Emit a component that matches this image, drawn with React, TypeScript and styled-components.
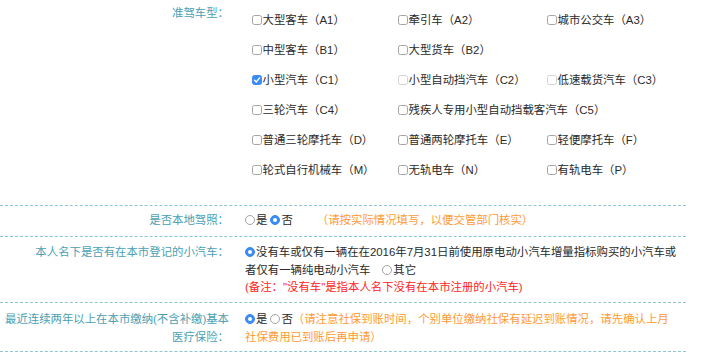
import styled, { createGlobalStyle } from "styled-components";

type Licence = { name: string; checked?: boolean; disabled?: boolean };

const licenceRows: Licence[][] = [
  [{ name: "大型客车（A1）" }, { name: "牵引车（A2）" }, { name: "城市公交车（A3）" }],
  [{ name: "中型客车（B1）" }, { name: "大型货车（B2）" }],
  [
    { name: "小型汽车（C1）", checked: true },
    { name: "小型自动挡汽车（C2）", disabled: true },
    { name: "低速载货汽车（C3）", disabled: true },
  ],
  [{ name: "三轮汽车（C4）" }, { name: "残疾人专用小型自动挡载客汽车（C5）" }],
  [{ name: "普通三轮摩托车（D）" }, { name: "普通两轮摩托车（E）" }, { name: "轻便摩托车（F）" }],
  [{ name: "轮式自行机械车（M）" }, { name: "无轨电车（N）" }, { name: "有轨电车（P）" }],
];

// checkbox glyph drawn as a small svg
const Checkbox: React.FC<{ checked?: boolean; disabled?: boolean }> = ({ checked, disabled }) => (
  <BoxIcon width="10" height="10" viewBox="0 0 10 10">
    <rect
      x="0.5"
      y="0.5"
      width="9"
      height="9"
      rx="2"
      fill={checked ? "#3a8cf4" : "#fff"}
      stroke={checked ? "#3a8cf4" : disabled ? "#d2d2d2" : "#a4a4a4"}
    />
    {checked && (
      <polyline points="2.6,5.2 4.3,7 7.6,2.9" fill="none" stroke="#fff" strokeWidth="1.4" strokeLinecap="round" strokeLinejoin="round" />
    )}
  </BoxIcon>
);

const App = () => {
  return (
    <>
      <GlobalStyle />
      <Form>
        <Row $pad="0 0 0">
          <Label $offset={5}>准驾车型：</Label>
          <Value>
            <Grid>
              {licenceRows.map((row, i) =>
                [0, 1, 2].map((j) =>
                  row[j] ? (
                    <Item key={`${i}-${j}`}>
                      <Checkbox checked={row[j].checked} disabled={row[j].disabled} />
                      <ItemText>{row[j].name}</ItemText>
                    </Item>
                  ) : (
                    <span key={`${i}-${j}`} />
                  )
                )
              )}
            </Grid>
          </Value>
        </Row>

        <Row $pad="6px 0 6.5px">
          <Label>是否本地驾照：</Label>
          <Value>
            <Radio />是<Radio $checked $gap={3} />否
            <Note $gap={24}>（请按实际情况填写，以便交管部门核实）</Note>
          </Value>
        </Row>

        <Row $pad="7px 0 5.5px">
          <Label>本人名下是否有在本市登记的小汽车：</Label>
          <Value>
            <Radio $checked />没有车或仅有一辆在在2016年7月31日前使用原电动小汽车增量指标购买的小汽车或者仅有一辆纯电动小汽车
            <Radio $gap={12} />其它
            <Warn>(备注："没有车"是指本人名下没有在本市注册的小汽车)</Warn>
          </Value>
        </Row>

        <Row $pad="8px 0 5px">
          <Label>
            最近连续两年以上在本市缴纳(不含补缴)基本
            <br />
            医疗保险：
          </Label>
          <Value>
            <Radio $checked />是<Radio $gap={3} />否
            <Note>（请注意社保到账时间，个别单位缴纳社保有延迟到账情况，请先确认上月社保费用已到账后再申请）</Note>
          </Value>
        </Row>
      </Form>
    </>
  );
};

const GlobalStyle = createGlobalStyle`
  body {
    margin: 0;
    background: #fff;
    color: #2a2a2a;
    font-family: "Liberation Sans", "Noto Sans CJK SC", sans-serif;
    font-size: 11.4px;
  }
`;

const Form = styled.div`
  width: 686px;
`;

const Row = styled.div<{ $pad: string }>`
  display: flex;
  padding: ${(p) => p.$pad};
  border-bottom: 1px dashed #8cc6d1;
  line-height: 17.5px;
`;

const Label = styled.div<{ $offset?: number }>`
  flex: none;
  width: 229px;
  margin-top: ${(p) => p.$offset ?? 0}px;
  text-align: right;
  white-space: nowrap;
  color: #4b9fb4;
`;

const Value = styled.div`
  flex: 1;
  padding: 0 8px 0 16px;
`;

const Grid = styled.div`
  display: grid;
  grid-template-columns: 146px 149px 1fr;
  grid-auto-rows: 30px;
  margin-left: 7px;
  padding: 5px 0 20px;
`;

const Item = styled.div`
  display: flex;
  align-items: center;
  white-space: nowrap;
`;

const ItemText = styled.span`
  line-height: 18px;
  color: #2a2a2a;
`;

const BoxIcon = styled.svg`
  flex: none;
  display: block;
  margin-right: 0.5px;
`;

const Radio = styled.span<{ $checked?: boolean; $gap?: number }>`
  display: inline-block;
  position: relative;
  box-sizing: border-box;
  width: 10px;
  height: 10px;
  margin: 0 1px 0 ${(p) => p.$gap ?? 0}px;
  vertical-align: -1px;
  border-radius: 50%;
  border: 1px solid ${(p) => (p.$checked ? "#3a8cf4" : "#a4a4a4")};
  background: ${(p) => (p.$checked ? "#3a8cf4" : "#fff")};

  &::after {
    content: "";
    display: ${(p) => (p.$checked ? "block" : "none")};
    position: absolute;
    left: 2px;
    top: 2px;
    width: 4px;
    height: 4px;
    border-radius: 50%;
    background: #fff;
  }
`;

const Note = styled.span<{ $gap?: number }>`
  margin-left: ${(p) => p.$gap ?? 0}px;
  color: #ff9a35;
`;

const Warn = styled.div`
  color: #ff2424;
`;

export default App;
